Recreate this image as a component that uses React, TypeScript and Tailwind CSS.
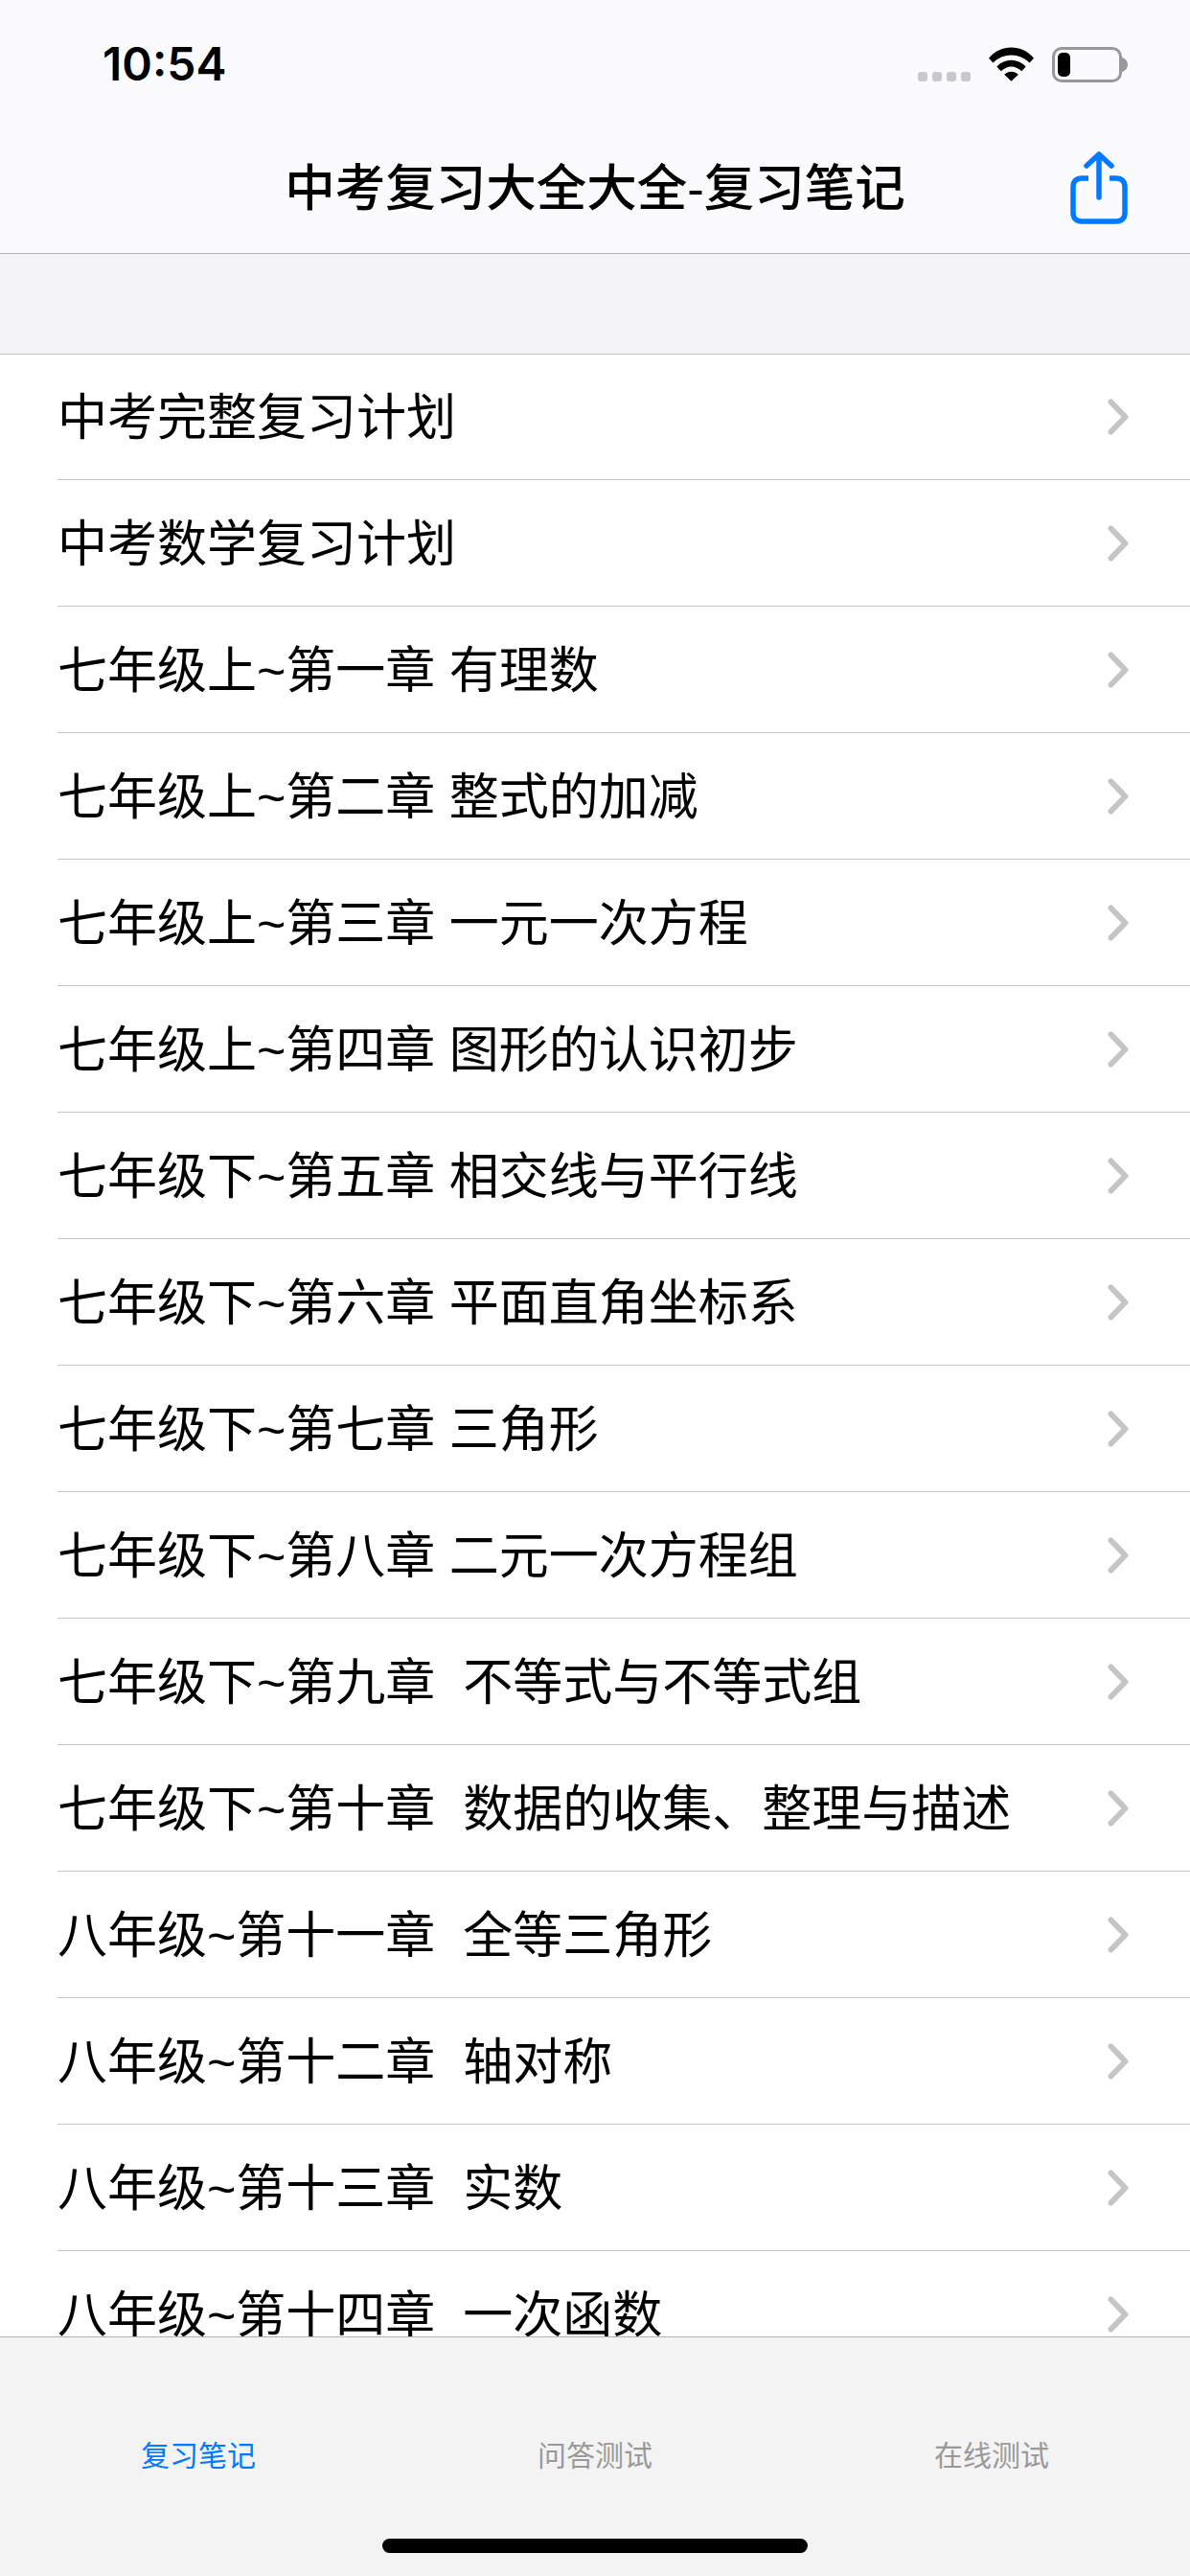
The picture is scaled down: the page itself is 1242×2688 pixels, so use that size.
const rows = [
  '中考完整复习计划',
  '中考数学复习计划',
  '七年级上~第一章 有理数',
  '七年级上~第二章 整式的加减',
  '七年级上~第三章 一元一次方程',
  '七年级上~第四章 图形的认识初步',
  '七年级下~第五章 相交线与平行线',
  '七年级下~第六章 平面直角坐标系',
  '七年级下~第七章 三角形',
  '七年级下~第八章 二元一次方程组',
  '七年级下~第九章  不等式与不等式组',
  '七年级下~第十章  数据的收集、整理与描述',
  '八年级~第十一章  全等三角形',
  '八年级~第十二章  轴对称',
  '八年级~第十三章  实数',
  '八年级~第十四章  一次函数',
];

const tabs = [
  { label: '复习笔记', active: true },
  { label: '问答测试', active: false },
  { label: '在线测试', active: false },
];

function WifiIcon() {
  return (
    <svg width="47" height="36" viewBox="0 0 48 36" className="block">
      <path d="M0 11.500 C13 -3.500 35 -3.500 48 11.500 L43.500 16.500 C32.500 5.500 15.500 5.500 4.500 16.500 Z" fill="#000" />
      <path d="M8.500 20.500 C17 11.500 31 11.500 39.500 20.500 L35 25.500 C28 19 20 19 13 25.500 Z" fill="#000" />
      <path d="M16.500 29 C21 25 27 25 31.500 29 L24 36 Z" fill="#000" />
    </svg>
  );
}

function Battery() {
  return (
    <div className="flex items-center">
      <div className="h-[37px] w-[73px] rounded-[10px] border-[3px] border-[#98989b] p-[3px]">
        <div className="h-full w-[13px] rounded-[5px] bg-black" />
      </div>
      <svg width="6" height="15" viewBox="0 0 6 15" className="block">
        <path d="M0 0 C3.500 1 6 4 6 7.500 C6 11 3.500 14 0 15 Z" fill="#98989b" />
      </svg>
    </div>
  );
}

function ShareIcon() {
  return (
    <svg width="60" height="76" viewBox="0 0 60 76" fill="none" stroke="#007aff" className="block">
      <path d="M19 28 H12 C6.500 28 3 31 3 37 V64 C3 70 6.500 73 12 73 H48 C53.500 73 57 70 57 64 V37 C57 31 53.500 28 48 28 H41" strokeWidth="5.500" strokeLinecap="butt" />
      <path d="M30 48 V4" strokeWidth="5.500" strokeLinecap="round" />
      <path d="M17 15 L30 3 L43 15" strokeWidth="5.500" strokeLinecap="round" strokeLinejoin="round" />
    </svg>
  );
}

function Chevron() {
  return (
    <svg width="22" height="38" viewBox="0 0 22 38" fill="none" className="block">
      <path d="M3.500 3.500 L18.500 19 L3.500 34.500" stroke="#c5c5c7" strokeWidth="6" strokeLinecap="round" strokeLinejoin="round" />
    </svg>
  );
}

export default function App() {
  return (
    <div className="flex h-[2688px] w-[1242px] flex-col overflow-hidden bg-white font-['Liberation_Sans','Noto_Sans_CJK_SC',sans-serif] text-black">
      <header className="h-[265px] shrink-0 border-b border-[#b2b2b2] bg-[#fbfbfd]">
        <div className="flex h-[132px] items-start justify-between pl-[107px] pr-[65px] pt-[44px]">
          <span className="font-['Inter',sans-serif] text-[48px] leading-[46px] font-semibold">10:54</span>
          <div className="flex items-start pt-[5px]">
            <div className="mt-[26px] flex gap-[5px]">
              <span className="size-[10px] rounded-[3px] bg-[#c9c9cb]" />
              <span className="size-[10px] rounded-[3px] bg-[#c9c9cb]" />
              <span className="size-[10px] rounded-[3px] bg-[#c9c9cb]" />
              <span className="size-[10px] rounded-[3px] bg-[#c9c9cb]" />
            </div>
            <div className="ml-[19px]">
              <WifiIcon />
            </div>
            <div className="ml-[19px]">
              <Battery />
            </div>
          </div>
        </div>
        <div className="relative flex h-[132px] items-start justify-center pt-[34px]">
          <h1 className="text-[52.5px] leading-[62px] font-medium">中考复习大全大全-复习笔记</h1>
          <div className="absolute right-[65px] top-[26px]">
            <ShareIcon />
          </div>
        </div>
      </header>

      <div className="h-[105px] shrink-0 border-b border-[#c6c6c8] bg-[#f2f2f7]" />

      <ul className="-mt-px min-h-0 flex-1 overflow-hidden">
        {rows.map((row) => (
          <li key={row} className="pl-[60px]">
            <div className="flex h-[132px] items-center justify-between border-b border-[#c6c6c8] pr-[64px]">
              <span className="pt-[3px] text-[52px] leading-[62px] whitespace-pre">{row}</span>
              <Chevron />
            </div>
          </li>
        ))}
      </ul>

      <nav className="relative h-[250px] shrink-0 border-t border-[#b2b2b2] bg-[#f3f3f4]">
        <div className="grid grid-cols-3 pt-[104px]">
          {tabs.map((tab) => (
            <span
              key={tab.label}
              className={`text-center text-[30px] leading-[40px] ${tab.active ? 'text-[#007aff]' : 'text-[#999999]'}`}
            >
              {tab.label}
            </span>
          ))}
        </div>
        <div className="absolute bottom-[24px] left-[399px] h-[15px] w-[444px] rounded-full bg-black" />
      </nav>
    </div>
  );
}
